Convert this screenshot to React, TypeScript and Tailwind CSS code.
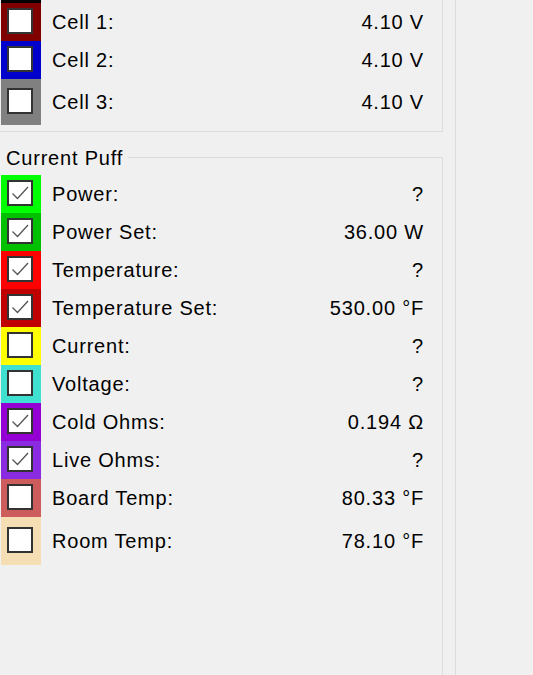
import React from 'react';

type Row = { label: string; value: string; color: string; checked: boolean; tall?: string };

const cells: Row[] = [
  { label: 'Cell 1:', value: '4.10 V', color: 'bg-[#800000]', checked: false },
  { label: 'Cell 2:', value: '4.10 V', color: 'bg-[#0000cd]', checked: false },
  { label: 'Cell 3:', value: '4.10 V', color: 'bg-[#808080]', checked: false, tall: 'h-[46px]' },
];

const puff: Row[] = [
  { label: 'Power:', value: '?', color: 'bg-[#00ff00]', checked: true },
  { label: 'Power Set:', value: '36.00 W', color: 'bg-[#00c000]', checked: true },
  { label: 'Temperature:', value: '?', color: 'bg-[#ff0000]', checked: true },
  { label: 'Temperature Set:', value: '530.00 °F', color: 'bg-[#c00000]', checked: true },
  { label: 'Current:', value: '?', color: 'bg-[#ffff00]', checked: false },
  { label: 'Voltage:', value: '?', color: 'bg-[#40e0d0]', checked: false },
  { label: 'Cold Ohms:', value: '0.194 Ω', color: 'bg-[#9400d3]', checked: true },
  { label: 'Live Ohms:', value: '?', color: 'bg-[#8a2be2]', checked: true },
  { label: 'Board Temp:', value: '80.33 °F', color: 'bg-[#cd5c5c]', checked: false },
  { label: 'Room Temp:', value: '78.10 °F', color: 'bg-[#f5deb3]', checked: false, tall: 'h-[48px]' },
];

const CheckBox: React.FC<{ checked: boolean }> = ({ checked }) => (
  <div className="w-[26px] h-[26px] border-2 border-[#333333] bg-white mb-[2px]">
    {checked && (
      <svg width="22" height="22" viewBox="0 0 22 22">
        <path d="M3.5 11.5 L8.5 16.5 L19 5" fill="none" stroke="#555555" strokeWidth="1.3" />
      </svg>
    )}
  </div>
);

const SensorRow: React.FC<{ row: Row }> = ({ row }) => (
  <div className={`flex items-center ${row.tall ?? 'h-[38px]'}`}>
    <div className={`w-[40px] h-full ml-[1px] pl-[6px] flex items-center ${row.color}`}>
      <CheckBox checked={row.checked} />
    </div>
    <div className="flex-1 pl-[11px] leading-[23px]">{row.label}</div>
    <div className="pr-[18px] leading-[23px]">{row.value}</div>
  </div>
);

export default function App() {
  return (
    <div className="w-[533px] h-[675px] bg-[#f0f0f0] overflow-hidden flex text-black text-[20px] tracking-[0.8px] font-['Liberation_Sans',Arial,sans-serif]">
      <div className="w-[443px] shrink-0 flex flex-col">
        <div className="border-r border-b border-[#dcdcdc] pb-[6px]">
          <div className="ml-[1px] w-[40px] h-[3px] bg-black" />
          {cells.map((r) => (
            <SensorRow key={r.label} row={r} />
          ))}
        </div>
        <div className="mt-[25px] flex-1 border-t border-r border-[#dcdcdc]">
          <div className="-mt-[11px] w-fit pl-[6px] pr-[5px] bg-[#f0f0f0] leading-[23px]">Current Puff</div>
          <div className="mt-[5px]">
            {puff.map((r) => (
              <SensorRow key={r.label} row={r} />
            ))}
          </div>
        </div>
      </div>
      <div className="ml-[12px] w-px h-full bg-[#dcdcdc]" />
    </div>
  );
}
